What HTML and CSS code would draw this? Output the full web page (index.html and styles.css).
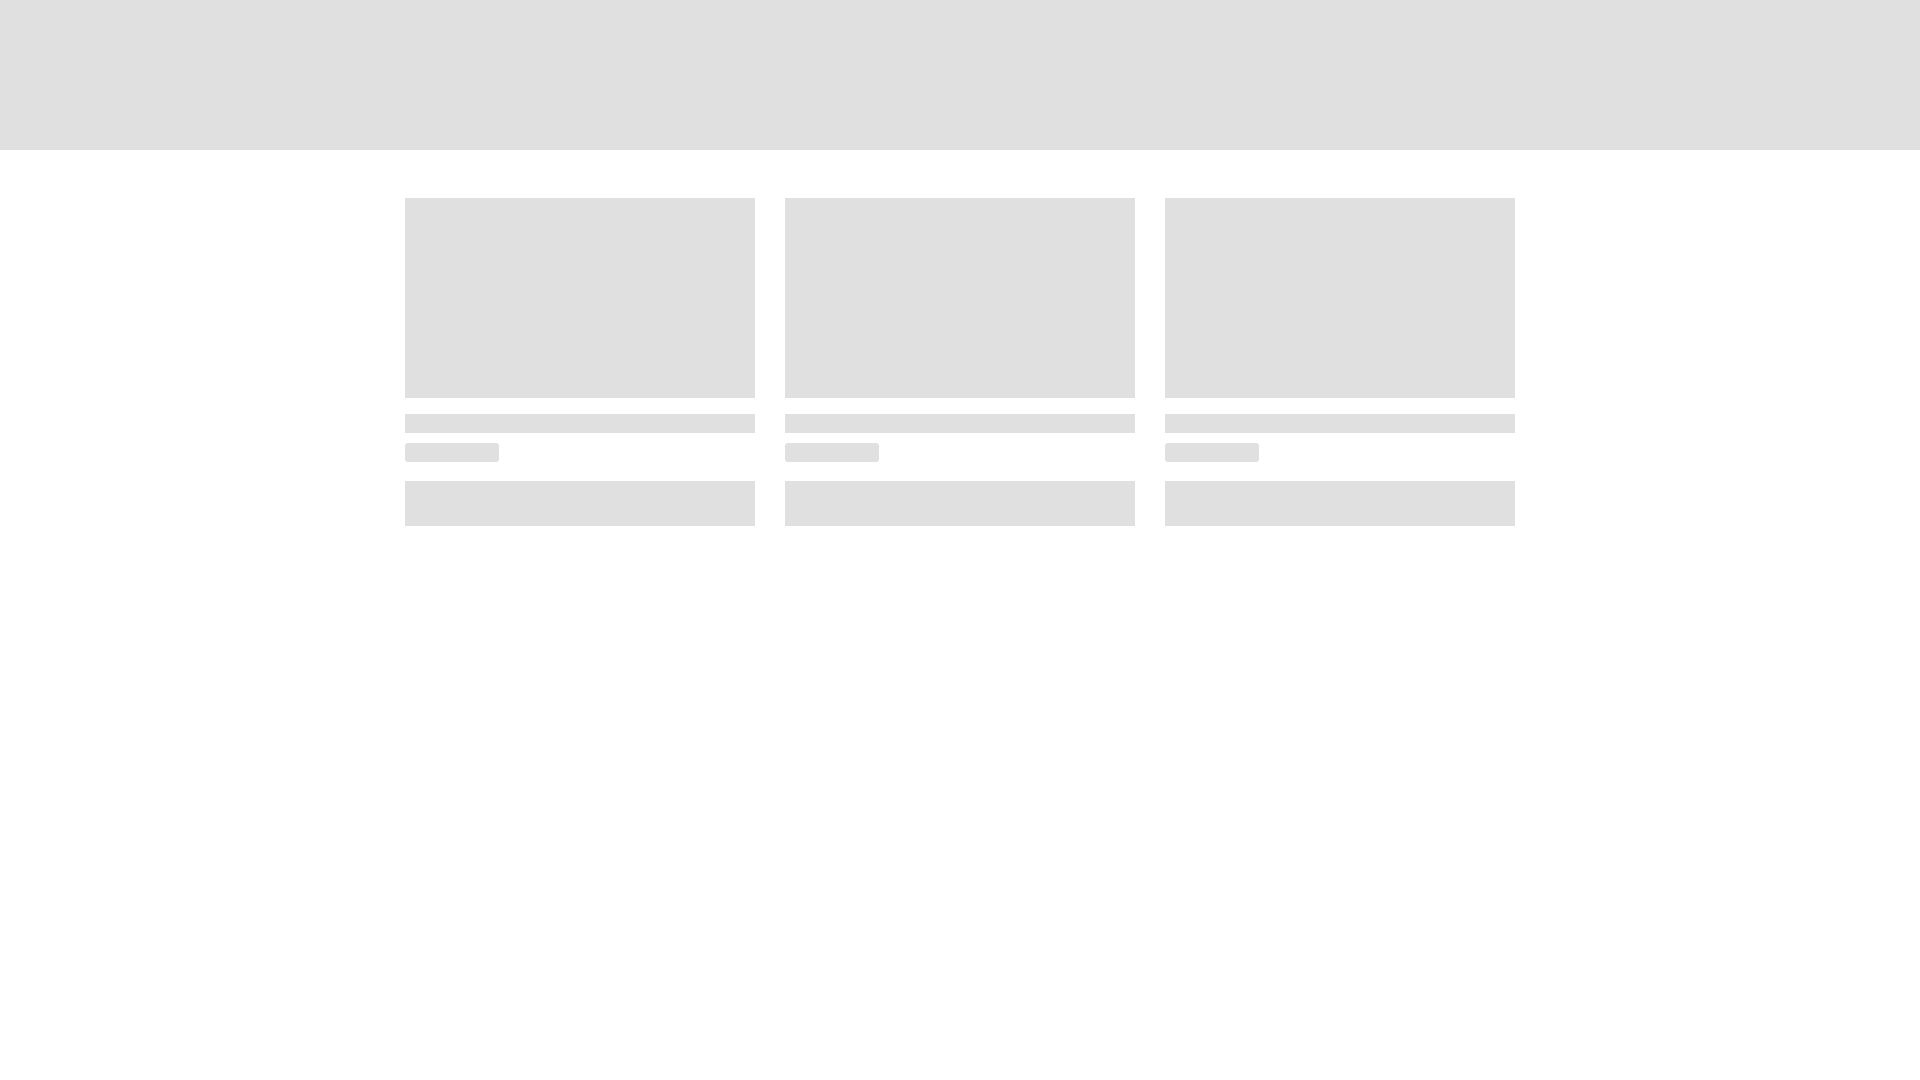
FILE: index.html
```html
<!DOCTYPE html>
<html lang="en">
<head>
<meta charset="utf-8">
<title>Loading</title>
<link rel="stylesheet" href="styles.css">
</head>
<body>
<header class="topbar"></header>
<main class="container">
  <div class="grid">
    <div class="card">
      <div class="sk sk-image"></div>
      <div class="sk sk-title"></div>
      <div class="sk sk-price"></div>
      <div class="sk sk-button"></div>
    </div>
    <div class="card">
      <div class="sk sk-image"></div>
      <div class="sk sk-title"></div>
      <div class="sk sk-price"></div>
      <div class="sk sk-button"></div>
    </div>
    <div class="card">
      <div class="sk sk-image"></div>
      <div class="sk sk-title"></div>
      <div class="sk sk-price"></div>
      <div class="sk sk-button"></div>
    </div>
  </div>
</main>
</body>
</html>
```

FILE: styles.css
```css
html, body {
  margin: 0;
  padding: 0;
  background: #ffffff;
  font-family: "Liberation Sans", Arial, sans-serif;
}

.topbar {
  height: 150px;
  background: #e0e0e0;
}

.container {
  width: 1110px;
  margin: 48px auto 0;
}

.grid {
  display: grid;
  grid-template-columns: repeat(3, 350px);
  column-gap: 30px;
}

.card {
  display: flex;
  flex-direction: column;
  align-items: flex-start;
}

.sk {
  background: #e0e0e0;
}

.sk-image {
  width: 100%;
  height: 200px;
}

.sk-title {
  width: 100%;
  height: 19px;
  margin-top: 16px;
}

.sk-price {
  width: 94px;
  height: 19px;
  margin-top: 10px;
  border-radius: 3px;
}

.sk-button {
  width: 100%;
  height: 45px;
  margin-top: 19px;
}
```
